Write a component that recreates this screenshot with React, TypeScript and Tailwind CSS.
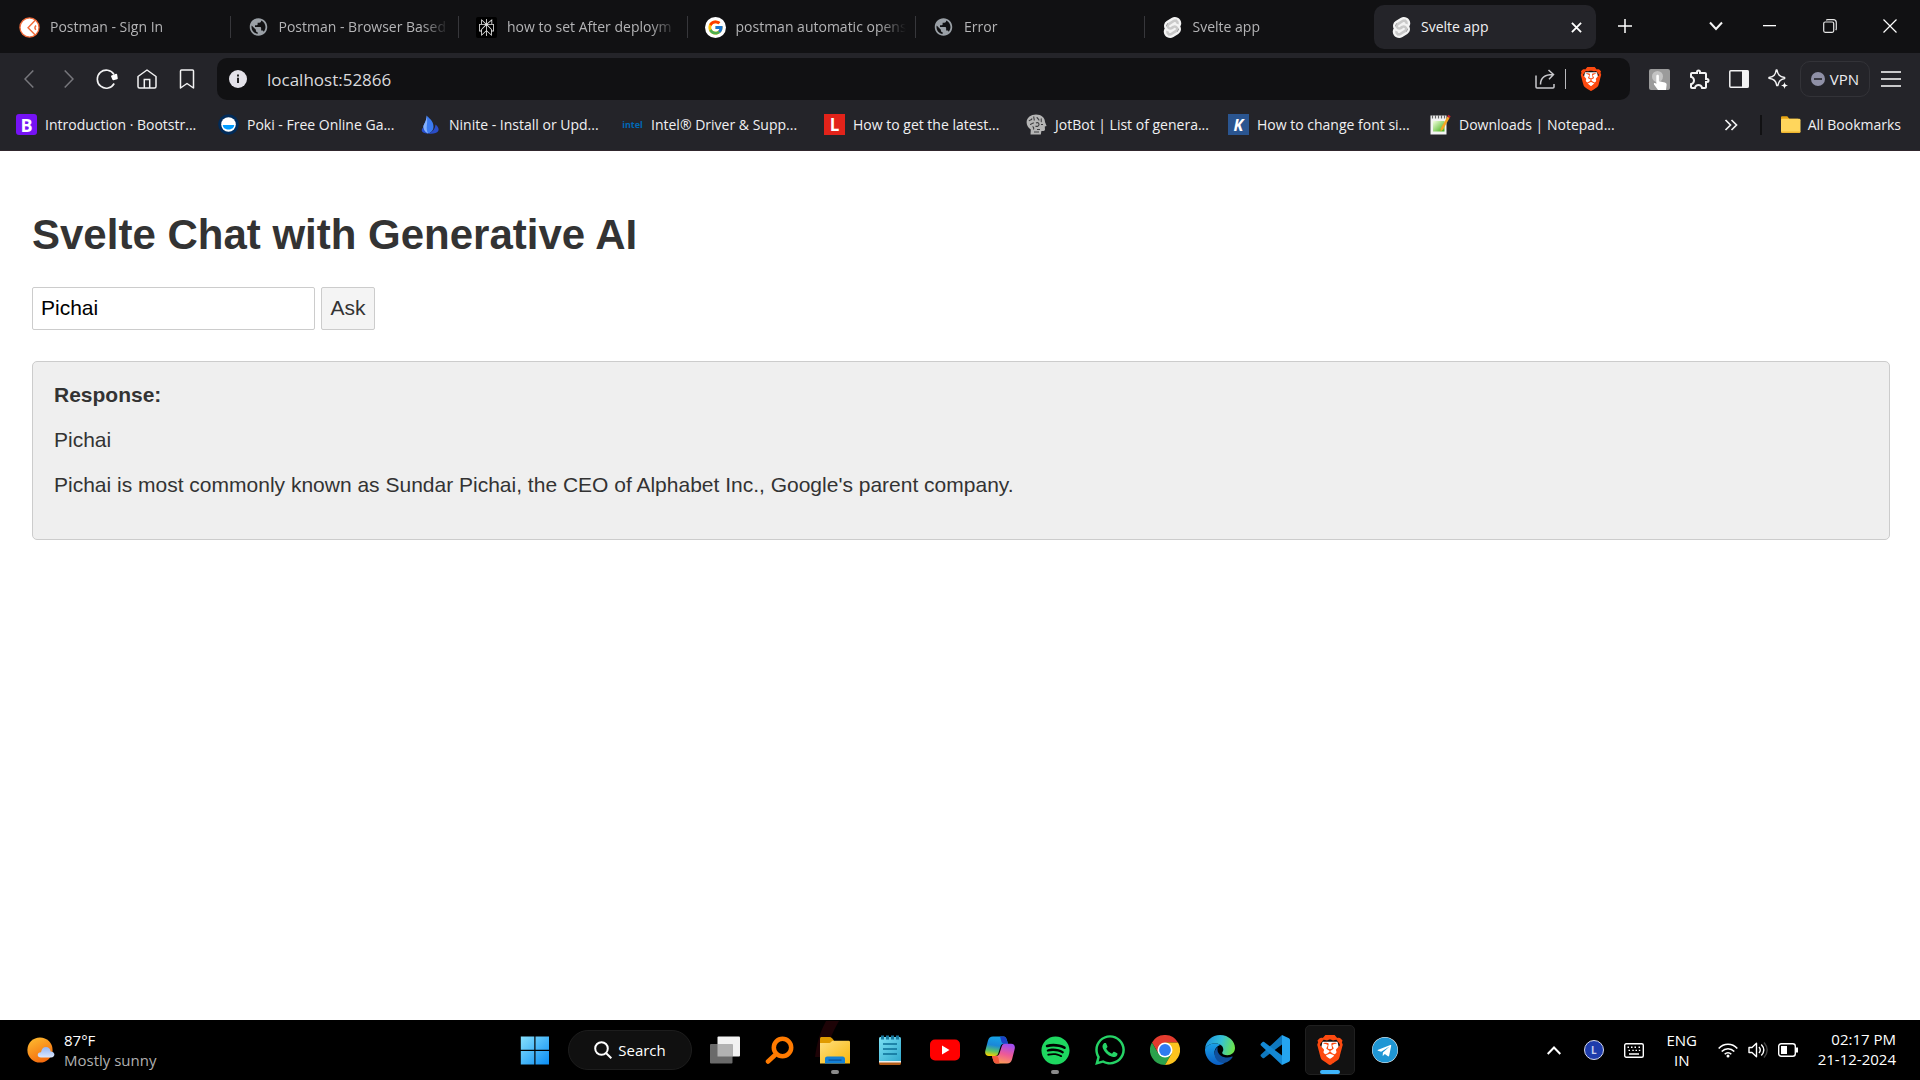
import { useState } from "react";
import type { ReactNode } from "react";
import { FaSpotify, FaWhatsapp, FaTelegram } from "react-icons/fa";
import { FcGoogle } from "react-icons/fc";
import { MdPublic, MdOutlineExtension } from "react-icons/md";
import { SiBrave, SiSvelte, SiPerplexity } from "react-icons/si";

/* ---------- Site icons ---------- */

function PostmanIcon() {
  return (
    <svg viewBox="0 0 22 22" className="size-[21px]" fill="none">
      <circle cx="11" cy="11" r="10" fill="#fff" stroke="#f26b3a" strokeWidth="1.4" />
      <path d="M17 3.5 9.5 11.2l7.5 7.6M9.5 11.2l2.6 2.6M17.8 8.8c-1.4 1.5-1.4 3.2-.2 4.7" stroke="#f26b3a" strokeWidth="1.5" />
    </svg>
  );
}

function PerplexityIcon() {
  return (
    <span className="flex size-[21px] items-center justify-center rounded-[2px] bg-black">
      <SiPerplexity className="size-[17px] text-[#e8e8e8]" />
    </span>
  );
}

function GoogleIcon() {
  return (
    <span className="flex size-[21px] items-center justify-center rounded-full bg-white">
      <FcGoogle className="size-[17px]" />
    </span>
  );
}

function GlobeIcon() {
  return <MdPublic className="size-[22px] text-[#9aa0a6]" />;
}

function SvelteIcon() {
  return (
    <svg viewBox="0 0 24 24" className="size-[21px]">
      <rect x="5" y="1.5" width="14" height="21" rx="6.500" transform="rotate(24 12 12)" fill="#c9c9c9" />
      <SiSvelte size={24} color="#f3f3f3" />
    </svg>
  );
}

function BraveIcon({ className }: { className: string }) {
  return (
    <svg viewBox="0 0 24 24" className={className}>
      <path d="M6 5.3h12l1 4.500-2.300 7.400-4.700 3.600-4.700-3.600L5 9.800z" fill="#fff" />
      <SiBrave size={24} color="#fd4a10" />
    </svg>
  );
}

function BootstrapIcon() {
  return (
    <span className="flex size-[21px] items-center justify-center rounded-[3px] bg-[#7612f5] text-[18px] leading-none font-bold text-white">
      B
    </span>
  );
}

function PokiIcon() {
  return (
    <svg viewBox="0 0 21 21" className="size-[21px]">
      <circle cx="10.5" cy="10.5" r="10.3" fill="#012b59" />
      <circle cx="10.5" cy="10.5" r="7.3" fill="#fff" />
      <path d="M4.800 11h11.400c0 6-11.400 6-11.400 0z" fill="#009cff" />
    </svg>
  );
}

function NiniteIcon() {
  return (
    <svg viewBox="0 0 21 21" className="size-[21px]">
      <path d="M6.500 1.500c2.500 2.600 7 5.400 7 11 0 4-2.500 6.500-5.500 7-3.500-1-5-4-4.600-7 .3-2.500 3.600-6 3.100-11z" fill="#3c7bf0" />
      <path d="M6.500 1.500c1.400 5 .3 9 .2 12 0 3 .6 4.500 1.300 6-3.500-1-5-4-4.600-7 .3-2.500 3.600-6 3.100-11z" fill="#84b0fb" />
      <path d="M15.500 10.500c2.500 2 3.800 4.300 2.800 6.500-1.500 2.500-6 3.200-10.300 2.500 4-1 7-4 7.500-9z" fill="#2a4dc8" />
      <path d="M3.200 13.500c-2 1.500-2 4 0 5 1.500.8 3.300 1.100 4.800 1-2.600-1.200-4.300-3.500-4.800-6z" fill="#2850d0" />
    </svg>
  );
}

function IntelIcon() {
  return <span className="w-[21px] text-center text-[9px] leading-none font-bold text-[#0068b5]">intel</span>;
}

function LetterIcon({ letter, className }: { letter: string; className: string }) {
  return <span className={"flex size-[21px] items-center justify-center leading-none font-bold text-white " + className}>{letter}</span>;
}

function HeadIcon() {
  return (
    <svg viewBox="0 0 21 21" className="size-[21px]" fill="none">
      <path d="M10 .5c5.500 0 9 3.200 9 7.500l1.600 4-1.800.6.2 3.200c-.2 1.200-1.500 1.300-3.600 1.200l-.6 3.500H4.500l.3-5C2 13.500.6 11 .6 8.200.8 3.500 5 .5 10 .5z" fill="#b5b5b5" />
      <path d="M3 7c1-1.500 2.500-.5 3-2.500M8 2.500C7 4 9 5 8 6.500M4 10.500c2 0 2-2 4-1.500M11 3c0 2 2 1.500 2 3.500M15.500 4.500c-1 1 .5 2.500-.5 3.500M10 9c1.500-1 3 0 3 1.500S11 13 9.500 12M6.500 13c1-.5 1.500 1 1 2.500M15 10.500h2M11 15.500h3M8 18h5" stroke="#3c3c3f" strokeWidth="1.100" />
    </svg>
  );
}

function NotepadPlusIcon() {
  return (
    <svg viewBox="0 0 21 21" className="size-[21px]">
      <defs>
        <linearGradient id="npp" x1="0" x2="1" y1="0" y2="1">
          <stop offset="0" stopColor="#f4ffe0" />
          <stop offset="1" stopColor="#3fae13" />
        </linearGradient>
      </defs>
      <path d="M.5 1.500h16v19H.5z" fill="#f3f3f3" />
      <path d="M3 7h11.500v10.500H3z" fill="url(#npp)" />
      <path d="M2.500 1v3.500M5.500 1v3.500M8.500 1v3.500M11.500 1v3.500M14.500 1v3.500" stroke="#666" strokeWidth="1.200" />
      <path d="m17.500 2.500 2.200 1.300L13 15.500l-2.500 2 .3-3.300z" fill="#f5a623" />
      <path d="m18.200.8 2.500 1.500-1 1.700-2.400-1.500z" fill="#c8232c" />
    </svg>
  );
}

function FolderIcon() {
  return (
    <svg viewBox="0 0 21 18" className="h-[18px] w-[21px]">
      <path d="M1 1.500C1 .7 1.500.2 2.300.2h5l2 2.500h8.700v5H1z" fill="#e6a514" />
      <rect x="1" y="2.800" width="19.500" height="14" rx="1.400" fill="#ffd65c" />
      <path d="M1 15.500h19.500c0 .8-.5 1.400-1.300 1.400H2.300c-.8 0-1.300-.6-1.300-1.400z" fill="#efb52f" />
    </svg>
  );
}

/* ---------- Browser window ---------- */

const tabs: { title: string; icon: ReactNode }[] = [
  { title: "Postman - Sign In", icon: <PostmanIcon /> },
  { title: "Postman - Browser Based", icon: <GlobeIcon /> },
  { title: "how to set After deploym", icon: <PerplexityIcon /> },
  { title: "postman automatic opens", icon: <GoogleIcon /> },
  { title: "Error", icon: <GlobeIcon /> },
  { title: "Svelte app", icon: <SvelteIcon /> },
];

const bookmarks: { title: string; icon: ReactNode }[] = [
  { title: "Introduction · Bootstr...", icon: <BootstrapIcon /> },
  { title: "Poki - Free Online Ga...", icon: <PokiIcon /> },
  { title: "Ninite - Install or Upd...", icon: <NiniteIcon /> },
  { title: "Intel® Driver & Supp...", icon: <IntelIcon /> },
  { title: "How to get the latest...", icon: <LetterIcon letter="L" className="bg-[#e2231a] text-[17px]" /> },
  { title: "JotBot | List of genera...", icon: <HeadIcon /> },
  { title: "How to change font si...", icon: <LetterIcon letter="K" className="bg-[#2a5590] text-[16px] italic" /> },
  { title: "Downloads | Notepad...", icon: <NotepadPlusIcon /> },
];

function IconButton({ label, className = "w-10", children }: { label: string; className?: string; children: ReactNode }) {
  return (
    <button type="button" aria-label={label} className={"flex h-10 shrink-0 items-center justify-center " + className}>
      {children}
    </button>
  );
}

function TabStrip() {
  return (
    <div className="flex h-[53px] items-start bg-[#111113] pl-[2px]">
      <div className="grid w-[1371px] shrink-0 grid-cols-6">
        {tabs.map((tab, i) => (
          <button key={i} type="button" className="flex h-[54px] min-w-0 items-center pl-[17px] text-left text-sm text-[#b4b4b6]">
            <span className="flex w-[21px] shrink-0 justify-center">{tab.icon}</span>
            <span className="ml-[10px] w-[170px] whitespace-nowrap [mask-image:linear-gradient(to_right,black_84%,transparent)]">
              {tab.title}
            </span>
            <span className={"ml-auto h-[22px] w-px " + (i < 5 ? "bg-[#37373b]" : "")} />
          </button>
        ))}
      </div>
      <div className="mt-[5px] ml-px flex h-11 w-[222px] shrink-0 items-center rounded-[10px] bg-[#242429] pl-[17px] text-sm text-[#f0f0f2]">
        <span className="flex w-[21px] shrink-0 justify-center"><SvelteIcon /></span>
        <span className="ml-[9px] grow">Svelte app</span>
        <IconButton label="Close tab">
          <svg viewBox="0 0 12 12" className="size-[11px]" fill="none" stroke="#fff" strokeWidth="2">
            <path d="m1 1 10 10M11 1 1 11" />
          </svg>
        </IconButton>
      </div>
      <div className="mt-[6px] ml-[9px]">
        <IconButton label="New tab">
          <svg viewBox="0 0 14 14" className="size-[14px]" fill="none" stroke="#fff" strokeWidth="1.500">
            <path d="M7 0v14M0 7h14" />
          </svg>
        </IconButton>
      </div>
      <div className="mt-[6px] ml-auto flex">
        <IconButton label="Search tabs" className="w-[46px]">
          <svg viewBox="0 0 14 10" className="h-[10px] w-[14px]" fill="none" stroke="#f4f4f4" strokeWidth="2">
            <path d="m1 1.500 6 6.500 6-6.500" />
          </svg>
        </IconButton>
        <IconButton label="Minimize" className="w-[60px]">
          <svg viewBox="0 0 13 2" className="h-[2px] w-[13px]"><path d="M0 0h13v1.300H0z" fill="#fff" /></svg>
        </IconButton>
        <IconButton label="Restore" className="w-[61px]">
          <svg viewBox="0 0 14 14" className="size-[14px]" fill="none" stroke="#e6e6e6" strokeWidth="1.200">
            <rect x=".7" y="3" width="10" height="10.300" rx="1.500" />
            <path d="M3.200 1.200c.5-.4.9-.5 1.500-.5h5.600c1.800 0 3 1.200 3 3v6c0 .6-.2 1-.6 1.500" />
          </svg>
        </IconButton>
        <IconButton label="Close" className="w-[60px]">
          <svg viewBox="0 0 14 14" className="size-[14px]" fill="none" stroke="#fff" strokeWidth="1.200">
            <path d="m.5.5 13 13M13.500.5l-13 13" />
          </svg>
        </IconButton>
      </div>
    </div>
  );
}

function Toolbar() {
  return (
    <div className="flex h-[53px] items-center pr-2 pb-px pl-[9px]">
      <IconButton label="Back">
        <svg viewBox="0 0 10 18" className="h-[18px] w-[10px]" fill="none" stroke="#77777c" strokeWidth="1.500">
          <path d="M9.300.5 1 9l8.300 8.500" />
        </svg>
      </IconButton>
      <IconButton label="Forward" className="w-[39px]">
        <svg viewBox="0 0 10 18" className="h-[18px] w-[10px]" fill="none" stroke="#77777c" strokeWidth="1.500">
          <path d="M.7.5 9 9 .7 17.500" />
        </svg>
      </IconButton>
      <IconButton label="Reload" className="w-[38px]">
        <svg viewBox="0 0 22 22" className="size-[22px]" fill="none" stroke="#f2f2f3" strokeWidth="1.600">
          <path d="M18.200 15.500a9 9 0 1 1-.2-9" />
          <path d="M15.800 8.200 20.300 6.500l.7 4-3.800.9z" fill="#fff" stroke="#fff" strokeLinejoin="round" />
        </svg>
      </IconButton>
      <IconButton label="Home" className="w-[41px]">
        <svg viewBox="0 0 20 20" className="size-5" fill="none" stroke="#f2f2f3" strokeWidth="1.500">
          <path d="M1 7.500 10 1l9 6.500v10a1.500 1.500 0 0 1-1.500 1.500h-15A1.500 1.500 0 0 1 1 17.500z" strokeLinejoin="round" />
          <path d="M7.300 19v-8.500h5.400V19" />
        </svg>
      </IconButton>
      <IconButton label="Bookmark this tab" className="w-[39px]">
        <svg viewBox="0 0 16 20" className="h-5 w-4" fill="none" stroke="#f2f2f3" strokeWidth="1.500" strokeLinejoin="round">
          <path d="M2.500 1h11c.6 0 1 .4 1 1v17L8 14.500 1.500 19V2c0-.6.4-1 1-1z" />
        </svg>
      </IconButton>
      <div className="ml-[11px] flex h-[42px] grow items-center rounded-[10px] bg-[#111113] pr-[26px] pl-[12px]">
        <svg viewBox="0 0 18 18" className="size-[18px] shrink-0">
          <circle cx="9" cy="9" r="9" fill="#e4e2e9" />
          <path d="M8 7.800h2v5.200H8zM8 4.500h2v2H8z" fill="#222" />
        </svg>
        <input
          aria-label="Address"
          defaultValue="localhost:52866"
          className="ml-[20px] h-8 grow bg-transparent text-[17px] text-[#dadadd] outline-none"
        />
        <IconButton label="Share">
          <svg viewBox="0 0 20 20" className="size-5" fill="none" stroke="#c9c9cd" strokeWidth="1.500">
            <path d="M1 6.500V18c0 .6.400 1 1 1h16c.6 0 1-.4 1-1v-3" />
            <path d="M5.500 15.500c0-6 4-10 12.500-10M13.500 1l5 4.500-4.500 4.700" />
          </svg>
        </IconButton>
        <span className="h-5 w-px bg-[#b9b9bd]" />
        <IconButton label="Brave Shields" className="ml-[12px] w-[26px]">
          <BraveIcon className="size-[24px]" />
        </IconButton>
      </div>
      <div className="ml-2 flex items-center">
        <IconButton label="Click extension" className="w-[42px]">
          <svg viewBox="0 0 21 21" className="size-[21px]">
            <rect width="21" height="21" rx="2" fill="#9b9b9b" />
            <circle cx="8.500" cy="7.500" r="5.500" fill="#c4c4c4" />
            <path d="M7.300 7c0-1.800 2.600-1.800 2.600 0v5.200l6 1.300c1.300.4 1.800 1.200 1.700 2.500l-.6 5H9l-4-5.500c-.6-1.200.6-1.800 1.500-1.200l.8.7z" fill="#fff" />
          </svg>
        </IconButton>
        <IconButton label="Extensions" className="w-[39px]">
          <MdOutlineExtension className="size-[24px] text-[#f2f2f3]" />
        </IconButton>
        <IconButton label="Side panel">
          <svg viewBox="0 0 20 18" className="h-[18px] w-5">
            <rect x=".8" y=".8" width="18.400" height="16.400" rx="1" fill="none" stroke="#f2f2f3" strokeWidth="1.500" />
            <path d="M13 .5h6.500v17H13z" fill="#f2f2f3" />
          </svg>
        </IconButton>
        <IconButton label="Leo AI" className="w-[38px]">
          <svg viewBox="0 0 20 20" className="size-5" fill="none">
            <path d="M9 1c.8 5 2.600 6.500 7.600 7.600 0 .5 0 .9 0 .9-3.800 1-5.600 2-6.800 7.100h-1C7.800 11.500 6 10.300 1 9.300v-.9C6 7.300 7.500 6 8.200 1z" stroke="#f2f2f3" strokeWidth="1.500" strokeLinejoin="round" />
            <path d="M16.500 13c.5 2.500 1 3 3.500 3.500-2.500.5-3 1-3.500 3.500-.5-2.500-1-3-3.500-3.500 2.500-.5 3-1 3.500-3.500z" fill="#fff" />
          </svg>
        </IconButton>
        <button type="button" className="ml-[3px] flex h-9 w-[70px] items-center justify-center gap-[5px] rounded-[10px] border border-[#333338] text-[15px] text-[#ececef]">
          <svg viewBox="0 0 14 14" className="size-[14px]">
            <circle cx="7" cy="7" r="7" fill="#8f90a6" />
            <path d="M3 6.200h8v1.600H3z" fill="#242429" />
          </svg>
          VPN
        </button>
        <IconButton label="Menu" className="w-[42px]">
          <svg viewBox="0 0 20 16" className="h-4 w-5" stroke="#fff" strokeWidth="1.500">
            <path d="M0 1h20M0 8h20M0 15h20" />
          </svg>
        </IconButton>
      </div>
    </div>
  );
}

function BookmarksBar() {
  return (
    <nav aria-label="Bookmarks" className="flex h-[45px] items-center border-b border-[#30262d] pb-[7px] pl-[16px] text-sm text-[#f0f0f2]">
      <div className="grid w-[1616px] shrink-0 grid-cols-8">
        {bookmarks.map((b) => (
          <a key={b.title} href="#" className="flex items-center gap-2 whitespace-nowrap">
            <span className="flex w-[21px] shrink-0 justify-center">{b.icon}</span>
            {b.title}
          </a>
        ))}
      </div>
      <div className="ml-auto flex items-center pr-[19px]">
        <IconButton label="More bookmarks">
          <svg viewBox="0 0 14 12" className="h-[12px] w-[14px]" fill="none" stroke="#f2f2f3" strokeWidth="1.700">
            <path d="m1.500 1 5 5-5 5M7.500 1l5 5-5 5" />
          </svg>
        </IconButton>
        <span className="mx-[9px] h-5 w-[2px] bg-[#111113]" />
        <a href="#" className="ml-[9px] flex items-center gap-[7px] whitespace-nowrap">
          <FolderIcon />
          All Bookmarks
        </a>
      </div>
    </nav>
  );
}

/* ---------- Web page ---------- */

function ChatPage() {
  const [question, setQuestion] = useState("Pichai");
  return (
    <main className="grow bg-white pt-[60px] pr-[30px] pl-8 font-['Liberation_Sans',Arial,sans-serif] text-[21px] leading-6 text-[#333]">
      <h1 className="text-[42px] leading-[48px] font-bold">Svelte Chat with Generative AI</h1>
      <form className="mt-7 flex gap-[6px]" onSubmit={(e) => e.preventDefault()}>
        <input
          aria-label="Question"
          value={question}
          onChange={(e) => setQuestion(e.target.value)}
          className="h-[43px] w-[283px] rounded-[2px] border border-[#ccc] px-2 pb-[2px] text-black"
        />
        <button type="submit" className="h-[43px] w-[54px] rounded-[2px] border border-[#ccc] bg-[#f4f4f4] pb-[2px] text-center">Ask</button>
      </form>
      <section className="mt-[31px] flex flex-col gap-[21px] rounded-[5px] border border-[#ccc] bg-[#efefef] px-[21px] pt-[21px] pb-[42px]">
        <strong>Response:</strong>
        <p>Pichai</p>
        <p>Pichai is most commonly known as Sundar Pichai, the CEO of Alphabet Inc., Google's parent company.</p>
      </section>
    </main>
  );
}

/* ---------- Taskbar ---------- */

function WeatherIcon() {
  return (
    <svg viewBox="0 0 28 26" className="h-[26px] w-7">
      <defs>
        <linearGradient id="sun" x1="0.2" x2="0.7" y1="0" y2="1">
          <stop offset="0" stopColor="#fdb92f" />
          <stop offset="1" stopColor="#f3660c" />
        </linearGradient>
        <linearGradient id="cloud" x1="0" x2="0" y1="0" y2="1">
          <stop offset="0" stopColor="#93b5f5" />
          <stop offset="1" stopColor="#dbe7fd" />
        </linearGradient>
      </defs>
      <circle cx="13" cy="13" r="12.600" fill="url(#sun)" />
      <path d="M14 20.500c-4.200 0-4.500-5 0-5.200.8-3.400 2.200-5.300 5-5.300 2.500 0 4.300 1.800 4.600 4.400 5 0 5 6.100.4 6.100z" fill="url(#cloud)" />
    </svg>
  );
}

function WindowsIcon() {
  return (
    <svg viewBox="0 0 30 30" className="size-[30px]">
      <defs>
        <linearGradient id="win" x1="0" x2="1" y1="0" y2="1">
          <stop offset="0" stopColor="#86e0fd" />
          <stop offset="1" stopColor="#0a8df3" />
        </linearGradient>
      </defs>
      <path d="M.8 1.500h13.500v13.300H.8zM15.500 1.500H29v13.300H15.500zM.8 16h13.500v13.500H.8zM15.500 16H29v13.500H15.500z" fill="url(#win)" />
    </svg>
  );
}

function TaskViewIcon() {
  return (
    <svg viewBox="0 0 30 30" className="size-[30px]">
      <rect x="7.500" y="1.500" width="22.500" height="20" rx="1" fill="#f2f2f2" />
      <rect y="9" width="22.500" height="19.500" rx="1" fill="#6a6a6a" />
      <path d="M7.500 9h15v12.500h-15z" fill="#b2b2b2" />
    </svg>
  );
}

function MagnifierIcon() {
  return (
    <svg viewBox="0 0 30 30" className="size-[30px]" fill="none" stroke="#ff7a00" strokeLinecap="round">
      <circle cx="17.500" cy="12.500" r="8.700" strokeWidth="4.500" />
      <path d="M9.500 20.500 3 26.500" strokeWidth="4.500" />
    </svg>
  );
}

function ExplorerIcon() {
  return (
    <svg viewBox="0 0 30 30" className="size-[30px]">
      <defs>
        <linearGradient id="fold" x1="0" x2="1" y1="0" y2="1">
          <stop offset="0" stopColor="#ffdf7e" />
          <stop offset="1" stopColor="#f8b70c" />
        </linearGradient>
      </defs>
      <path d="M0 3.500C0 2.700.7 2 1.500 2h8c1 0 1.700.4 2.500 1.200L14 5.500V10H0z" fill="#e09b00" />
      <path d="M0 8h8.500c1.500 0 2-.5 3-1.500l1-.8h16c1 0 1.500.5 1.500 1.500v21.300H0z" fill="url(#fold)" />
      <path d="M5 28.500v-4.700c0-1.400 1-2.300 2.300-2.300h15.400c1.300 0 2.300 1 2.300 2.300v4.700z" fill="#1380d5" />
      <path d="M8.500 24.500h13v1.200h-13z" fill="#0a4d93" />
    </svg>
  );
}

function NotepadIcon() {
  return (
    <svg viewBox="0 0 30 30" className="size-[30px]">
      <defs>
        <linearGradient id="pad" x1="0" x2="1" y1="0" y2="1">
          <stop offset="0" stopColor="#7be0f4" />
          <stop offset="1" stopColor="#30a9cd" />
        </linearGradient>
      </defs>
      <path d="M4 26h22v2.500c0 .8-.6 1.500-1.500 1.500h-19C4.700 30 4 29.300 4 28.500z" fill="#b35c18" />
      <path d="M4 25h22v2.500H4z" fill="#eee" />
      <path d="M4 3.500C4 2.700 4.600 2 5.500 2h19c.9 0 1.500.7 1.500 1.500V26H4z" fill="url(#pad)" />
      <path d="M8 9h14M8 14h14M8 19h14" stroke="#0d6f97" strokeWidth="1.700" />
      <path d="M7.500.5v4M12.500.5v4M17.500.5v4M22.500.5v4" stroke="#19799f" strokeWidth="3" />
    </svg>
  );
}

function YouTubeIcon() {
  return (
    <svg viewBox="0 0 30 22" className="h-[22px] w-[30px]">
      <rect y=".5" width="30" height="21" rx="5" fill="#f00" />
      <path d="m12 6.500 7.500 4.500-7.500 4.500z" fill="#fff" />
    </svg>
  );
}

function CopilotIcon() {
  return (
    <svg viewBox="0 0 30 30" className="size-[30px]">
      <defs>
        <linearGradient id="cpA" x1="0.500" x2="0.300" y1="0" y2="1">
          <stop offset="0" stopColor="#16a5e8" />
          <stop offset="0.450" stopColor="#1b87d8" />
          <stop offset="0.750" stopColor="#58c26a" />
          <stop offset="1" stopColor="#f5d000" />
        </linearGradient>
        <linearGradient id="cpB" x1="0.600" x2="0.300" y1="0" y2="1">
          <stop offset="0" stopColor="#a04df0" />
          <stop offset="0.500" stopColor="#ee5a96" />
          <stop offset="1" stopColor="#fda054" />
        </linearGradient>
      </defs>
      <path d="M8 1.500h10.500c2 0 2.700 1.300 3.300 3.200l1.200 4H19c-2 0-3 1-3.600 3l-2 6.300C12.800 20 12 21 10 21H4c-3.500 0-4.500-2.500-3.500-6L3 5.500C3.800 2.800 5.300 1.500 8 1.500z" fill="url(#cpA)" />
      <path d="M15 1.500h3.500c2 0 2.700 1.300 3.300 3.200l1.200 4H19c-1.500 0-2.300-1-2.700-2.500z" fill="#1b43c8" />
      <path d="M22 28.500H11.500c-2 0-2.700-1.300-3.300-3.200L7 21h4c2 0 3-1 3.600-3l2-6.300C17.200 9.800 18 8.800 20 8.800h6c3.500 0 4.500 2.500 3.500 6L27 24.500c-.8 2.700-2.300 4-5 4z" fill="url(#cpB)" />
      <path d="M14.500 28.500h-3c-2 0-2.700-1.300-3.300-3.200L7 21h4c1.500 0 2.200 1 2.600 2.500z" fill="#f2593d" />
    </svg>
  );
}

function ChromeIcon() {
  return (
    <svg viewBox="0 0 30 30" className="size-[30px]">
      <path d="M2 7.500A15 15 0 0 1 28 7.500H15L8.500 18.800z" fill="#e33b2e" />
      <path d="M2 7.500A15 15 0 0 0 15 30l6.500-11.300-13 .1z" fill="#2ba24c" />
      <path d="M28 7.500A15 15 0 0 1 15 30l6.500-11.300L15 7.500z" fill="#fcc31e" />
      <circle cx="15" cy="15" r="7.500" fill="#fff" />
      <circle cx="15" cy="15" r="5.900" fill="#2f7bf0" />
    </svg>
  );
}

function EdgeIcon() {
  return (
    <svg viewBox="0 0 30 30" className="size-[30px]">
      <defs>
        <linearGradient id="edgeTop" x1="0" x2="1" y1="0.400" y2="0.600">
          <stop offset="0" stopColor="#1d94e0" />
          <stop offset="0.500" stopColor="#35c1d6" />
          <stop offset="1" stopColor="#6fe645" />
        </linearGradient>
        <linearGradient id="edgeLow" x1="0" x2="0" y1="0" y2="1">
          <stop offset="0" stopColor="#1aa0e6" />
          <stop offset="1" stopColor="#0a5dc4" />
        </linearGradient>
      </defs>
      <path d="M0 14C.6 5.800 7 0 15 0c9 0 15 6.500 15 13 0 4.500-3.500 7.200-7.500 7.200-3.300 0-5.300-1.200-5.300-2.400 0-.8 1.100-1.300 1.100-3.300C18.300 11 15 8.500 10.500 8.500 5.500 8.500 1.500 10.500 0 14z" fill="url(#edgeTop)" />
      <path d="M0 14c1.500-3.500 5.500-5.500 10.500-5.500 2 0 4 .6 5.200 1.500-3.700.5-6.200 4-6.200 7.500 0 5.500 5 10 10.500 10-1.500 1.500-3.500 2.500-6 2.500C6 29.500-.3 22.500 0 14z" fill="url(#edgeLow)" />
      <path d="M12.500 12c-2 2-3 4-3 6.500 0 6.500 5.500 10.500 10.500 9.300 3-.8 5.700-2.800 7.500-5.500.4-.6-.1-.9-.6-.7-6 2.800-14-.6-14.400-6.600-.1-1.200.3-2.200 0-3z" fill="#0f4f9c" />
    </svg>
  );
}

function VSCodeIcon() {
  return (
    <svg viewBox="0 0 30 30" className="size-[30px]">
      <path d="M22 0 1 19.500c-.6.600-.6 1.500 0 2l1.600 1.500c.5.400 1 .4 1.600 0L22 9.500z" fill="#0f78be" />
      <path d="M22 30 1 10.500c-.6-.6-.6-1.500 0-2L2.600 7c.5-.4 1-.4 1.600 0L22 20.500z" fill="#1489d4" />
      <path d="M22 0l7 3.300c.6.300 1 .9 1 1.700v20c0 .8-.4 1.400-1 1.700L22 30z" fill="#25a5f0" />
    </svg>
  );
}

function TaskItem({ label, indicator, active, children }: { label: string; indicator?: boolean; active?: boolean; children: ReactNode }) {
  return (
    <button
      type="button"
      aria-label={label}
      className={
        "relative flex size-[50px] shrink-0 items-center justify-center rounded-[5px] border " +
        (active ? "border-[#202020] bg-[#121212]" : "border-transparent")
      }
    >
      {children}
      {indicator && <span className="absolute bottom-0 h-1 w-2 rounded-full bg-[#8b8b8b]" />}
      {active && <span className="absolute bottom-0 h-1 w-5 rounded-full bg-[#3fb6fb]" />}
    </button>
  );
}

function Taskbar() {
  return (
    <footer className="grid h-[60px] shrink-0 grid-cols-[1fr_auto_1fr] items-center bg-black text-[15px] leading-5 text-white">
      <button type="button" className="flex items-center gap-[9px] justify-self-start pb-px pl-[27px] text-left">
        <WeatherIcon />
        <span className="block">
          <span className="block">87°F</span>
          <span className="block text-[#b0b0b0]">Mostly sunny</span>
        </span>
      </button>

      <div className="flex items-center gap-[5px]">
        <TaskItem label="Start"><WindowsIcon /></TaskItem>
        <button type="button" className="mx-[3px] flex h-10 w-[124px] shrink-0 items-center justify-center gap-[6px] rounded-full border border-[#1d1d1d] bg-[#101010]">
          <svg viewBox="0 0 18 18" className="size-[18px]" fill="none" stroke="#fff" strokeWidth="2">
            <circle cx="7.500" cy="7.500" r="6.300" />
            <path d="m12 12 5.300 5.300" />
          </svg>
          Search
        </button>
        <TaskItem label="Task view"><TaskViewIcon /></TaskItem>
        <TaskItem label="Everything"><MagnifierIcon /></TaskItem>
        <TaskItem label="File Explorer" indicator>
          <svg viewBox="0 0 30 36" className="absolute -top-[5px] -left-[1px] h-9 w-[30px]" aria-hidden="true">
            <path d="M16 0h13C22 12 18 22 16 36H5C7 22 10 11 16 0z" fill="#1d0306" />
          </svg>
          <span className="relative"><ExplorerIcon /></span>
        </TaskItem>
        <TaskItem label="Notepad"><NotepadIcon /></TaskItem>
        <TaskItem label="YouTube"><YouTubeIcon /></TaskItem>
        <TaskItem label="Copilot"><CopilotIcon /></TaskItem>
        <TaskItem label="Spotify" indicator><FaSpotify className="size-[29px] text-[#1ed760]" /></TaskItem>
        <TaskItem label="WhatsApp"><FaWhatsapp className="size-[34px] text-[#25d366]" /></TaskItem>
        <TaskItem label="Chrome"><ChromeIcon /></TaskItem>
        <TaskItem label="Edge"><EdgeIcon /></TaskItem>
        <TaskItem label="Visual Studio Code"><VSCodeIcon /></TaskItem>
        <TaskItem label="Brave" active><BraveIcon className="size-[30px]" /></TaskItem>
        <TaskItem label="Telegram">
          <span className="flex items-center justify-center rounded-full bg-white">
            <FaTelegram className="size-[26px] text-[#1f96d4]" />
          </span>
        </TaskItem>
      </div>

      <div className="flex items-center justify-self-end pr-6">
        <IconButton label="Show hidden icons">
          <svg viewBox="0 0 14 9" className="h-[9px] w-[14px]" fill="none" stroke="#fff" strokeWidth="2">
            <path d="m.7 8 6.300-6.500L13.300 8" />
          </svg>
        </IconButton>
        <IconButton label="Clock app">
          <span className="flex size-5 items-center justify-center rounded-full border border-[#d5d9ee] bg-[#1e3cab] text-[10px] font-bold text-[#c9cfec]">L</span>
        </IconButton>
        <IconButton label="Touch keyboard">
          <svg viewBox="0 0 20 15" className="h-[15px] w-5" fill="none" stroke="#fff" strokeWidth="1.400">
            <rect x=".7" y=".7" width="18.600" height="13.600" rx="1.500" />
            <path d="M3.500 4.200H5M7 4.200h1.500M10.500 4.200H12M14.500 4.200H16M4.500 7.400H6M8.300 7.400h1.500M11.500 7.400H13M14.800 7.400h1.500M5 11h10" />
          </svg>
        </IconButton>
        <button type="button" className="w-[56px] text-center">ENG<br />IN</button>
        <button type="button" aria-label="Network, volume and battery" className="ml-[8px] flex items-center gap-[10px]">
          <svg viewBox="0 0 20 15" className="h-[15px] w-5" fill="none" stroke="#fff" strokeWidth="1.600">
            <path d="M.7 5.500c5.200-5.600 13.400-5.600 18.600 0M3.700 8.500c3.600-3.700 9-3.700 12.600 0M6.700 11.300c2-2 4.600-2 6.600 0" />
            <circle cx="10" cy="13" r="1.500" fill="#fff" stroke="none" />
          </svg>
          <svg viewBox="0 0 20 18" className="h-[18px] w-5" fill="none" stroke="#fff" strokeWidth="1.400">
            <path d="M1 6.500h3l4.500-4.300v13.600L4 11.500H1z" strokeLinejoin="round" />
            <path d="M11 6c1.700 2 1.700 4 0 6M13.300 3.500c3.200 3.500 3.200 7.500 0 11" />
            <path d="M16 1.500c4 4.700 4 10.300 0 15" stroke="#444" />
          </svg>
          <svg viewBox="0 0 20 14" className="h-[14px] w-5" fill="none">
            <rect x=".7" y=".7" width="16.600" height="12.600" rx="2.500" stroke="#fff" strokeWidth="1.400" />
            <path d="M3 3h6v8H3zM18 4.500h2v5h-2z" fill="#fff" />
          </svg>
        </button>
        <button type="button" className="ml-[20px] pb-[2px] text-right">02:17 PM<br />21-12-2024</button>
      </div>
    </footer>
  );
}

export default function App() {
  return (
    <div className="flex min-h-screen flex-col font-['Open_Sans','Noto_Sans',sans-serif]">
      <header className="bg-[#242429]">
        <TabStrip />
        <Toolbar />
        <BookmarksBar />
      </header>
      <ChatPage />
      <Taskbar />
    </div>
  );
}
